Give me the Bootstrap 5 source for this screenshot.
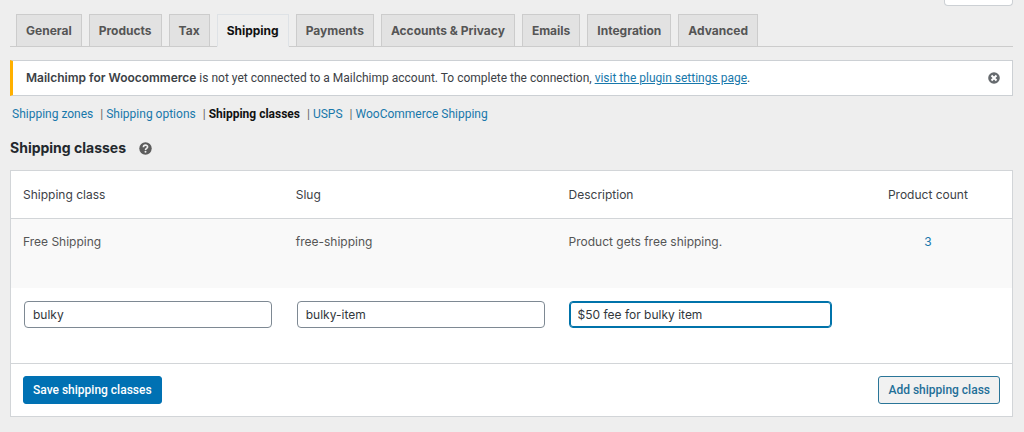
<!DOCTYPE html>
<html lang="en">
<head>
<meta charset="utf-8">
<meta name="viewport" content="width=device-width, initial-scale=1">
<title>Shipping classes</title>
<link href="https://cdn.jsdelivr.net/npm/bootstrap@5.3.0/dist/css/bootstrap.min.css" rel="stylesheet">
<style>
body { background: #eee; color: #3c4146; font: 12px/18px Inter, "Liberation Sans", sans-serif; }
a { color: #1878ab; }
.page-wrap { padding: 0 11px 15px 10px; }
.screen-tab { width: 69px; height: 6px; background: #fff; border: 1px solid #ccd0d4; border-top: 0; border-radius: 0 0 4px 4px; padding: 0; }
.settings-tabs { --bs-nav-tabs-border-color: #ccc; gap: 7px; padding: 0 6px; margin-top: 8px; }
.settings-tabs .nav-link { font-size: 12px; line-height: 20px; font-weight: 700; color: #555; background: #e2e2e2; border: 1px solid #ccc; border-radius: 0; padding: 6px 9px 5px; }
.settings-tabs .nav-link.active { color: #111; background: #eee; border-bottom-color: #eee; }
.notice, .sections, .panel-foot .btn { font-family: Roboto, "Liberation Sans", sans-serif; }
.notice { background: #fff; border: 1px solid #ccd0d4; border-left: 3px solid #ffb000; margin-top: 13px; padding: 8px 12px 8px 13px; }
.notice strong { font-family: Inter, "Liberation Sans", sans-serif; font-weight: 600; }
.icon-btn { line-height: 0; color: #666a6e; }
.sections { margin-top: 9px; padding-left: 2px; color: #666; }
.sections a { text-decoration: none; }
.sections a:not(:last-child)::after { content: "|"; color: #666; font-weight: 400; margin: 0 3px 0 7px; }
.sections a.current { color: #111; font-weight: 700; }
h2.title { font-size: 14px; line-height: 22px; font-weight: 700; color: #23282d; margin: 14px 0 11px; }
.title svg { margin-left: 13px; }
.panel { background: #fff; border: 1px solid #d2d5d8; }
.class-table { table-layout: fixed; color: #3c4146; }
.class-table th { font-weight: 400; padding: 15px 12px 14px; line-height: 18px; border-bottom: 1px solid #d2d5d8; }
.class-table td { padding: 13px 12px 12px; vertical-align: top; }
.col-name { width: 27.25%; }
.col-desc { width: 28.7%; }
.saved-row { background: #f9f9f9; color: #555; }
.saved-row td { height: 69px; padding-top: 14px; }
.edit-row td { height: 75px; }
.edit-row td:not(:nth-child(3)) { padding-left: 13px; }
.text-field { height: 27px; padding: 0 8px; font-size: 12px; color: #32373c; border: 1px solid #7e8993; border-radius: 4px; }
.text-field.active, .text-field:focus { border-color: #0073aa; box-shadow: inset 0 0 0 1px #0073aa; }
.panel-foot { border-top: 1px solid #d2d5d8; padding: 12px; }
.panel-foot .btn { font-size: 12px; line-height: 18px; font-weight: 500; border-radius: 3px; padding: 4px 9px; }
.btn-save { --bs-btn-color: #fff; --bs-btn-bg: #0071b3; --bs-btn-border-color: #0071b3; --bs-btn-hover-color: #fff; --bs-btn-hover-bg: #006099; }
.btn-add { --bs-btn-color: #1f6f98; --bs-btn-bg: #f1f1f1; --bs-btn-border-color: #2a7598; --bs-btn-hover-color: #016087; --bs-btn-hover-bg: #f8f8f8; }
</style>
</head>
<body>
<div class="container-fluid page-wrap">
  <div class="d-flex justify-content-end"><button type="button" class="screen-tab" aria-label="Help"></button></div>
  <nav class="nav nav-tabs settings-tabs">
    <a class="nav-link" href="#">General</a>
    <a class="nav-link" href="#">Products</a>
    <a class="nav-link" href="#">Tax</a>
    <a class="nav-link active" aria-current="page" href="#">Shipping</a>
    <a class="nav-link" href="#">Payments</a>
    <a class="nav-link" href="#">Accounts &amp; Privacy</a>
    <a class="nav-link" href="#">Emails</a>
    <a class="nav-link" href="#">Integration</a>
    <a class="nav-link" href="#">Advanced</a>
  </nav>
  <div class="notice d-flex align-items-center justify-content-between">
    <div><strong>Mailchimp for Woocommerce</strong> is not yet connected to a Mailchimp account. To complete the connection, <a href="#">visit the plugin settings page</a>.</div>
    <button type="button" class="btn p-0 border-0 icon-btn" aria-label="Dismiss">
      <svg width="12" height="12" viewBox="0 0 12 12"><circle cx="6" cy="6" r="5.8" fill="currentColor"/><path d="M3.500 3.500l5 5M8.500 3.500l-5 5" stroke="#fff" stroke-width="2"/></svg>
    </button>
  </div>
  <div class="sections d-flex">
    <a href="#">Shipping zones</a>
    <a href="#">Shipping options</a>
    <a href="#" class="current">Shipping classes</a>
    <a href="#">USPS</a>
    <a href="#">WooCommerce Shipping</a>
  </div>
  <h2 class="title d-flex align-items-center">Shipping classes
    <svg width="13" height="13" viewBox="0 0 13 13" role="img" aria-label="Help"><circle cx="6.5" cy="6.5" r="6.2" fill="#5c5c5c"/><path d="M4.400 5.200C4.400 2.500 8.600 2.500 8.600 4.900C8.600 6.400 6.500 6.300 6.500 8" fill="none" stroke="#eee" stroke-width="1.600"/><circle cx="6.500" cy="9.800" r="1" fill="#eee"/></svg>
  </h2>
  <form class="panel">
    <table class="class-table w-100">
      <thead>
        <tr><th class="col-name">Shipping class</th><th class="col-name">Slug</th><th class="col-desc">Description</th><th class="text-center">Product count</th></tr>
      </thead>
      <tbody>
        <tr class="saved-row"><td>Free Shipping</td><td>free-shipping</td><td>Product gets free shipping.</td><td class="text-center"><a href="#" class="text-decoration-none">3</a></td></tr>
        <tr class="edit-row">
          <td><input class="form-control text-field" type="text" aria-label="Shipping class" value="bulky"></td>
          <td><input class="form-control text-field" type="text" aria-label="Slug" value="bulky-item"></td>
          <td><input class="form-control text-field active" type="text" aria-label="Description" value="$50 fee for bulky item"></td>
          <td></td>
        </tr>
      </tbody>
    </table>
    <div class="panel-foot d-flex justify-content-between">
      <button type="submit" class="btn btn-save">Save shipping classes</button>
      <button type="button" class="btn btn-add">Add shipping class</button>
    </div>
  </form>
</div>
<script src="https://cdn.jsdelivr.net/npm/bootstrap@5.3.0/dist/js/bootstrap.bundle.min.js"></script>
</body>
</html>
